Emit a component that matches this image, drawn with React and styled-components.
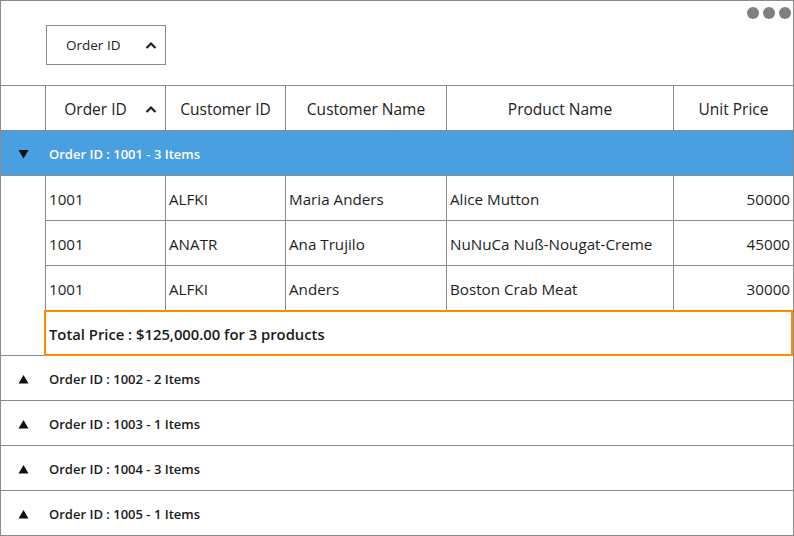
import React from "react"
import styled, { createGlobalStyle } from "styled-components"

const GlobalStyle = createGlobalStyle`
  html, body {
    margin: 0;
    padding: 0;
    background: #ffffff;
  }
  body {
    font-family: "Open Sans", "Noto Sans", sans-serif;
    color: #222222;
  }
`

const LINE = "#8a8a8a"
const COLS = "45px 120px 120px 161px 227px 119px"

const Grid = styled.div`
  width: 794px;
  height: 536px;
  box-sizing: border-box;
  border: 1px solid ${LINE};
  border-bottom: 0;
  overflow: hidden;
`

const DropArea = styled.div`
  height: 85px;
  box-sizing: border-box;
  border-bottom: 1px solid ${LINE};
  display: flex;
  justify-content: space-between;
  align-items: flex-start;
  padding: 6px 2px 0 45px;
`

const GroupChip = styled.div`
  margin-top: 18px;
  width: 120px;
  height: 40px;
  box-sizing: border-box;
  border: 1px solid ${LINE};
  display: flex;
  align-items: center;
  padding: 0 8px 0 19px;
  font-size: 13.5px;
  color: #222;
`

const ChipLabel = styled.span`
  flex: 1;
`

const Dots = styled.div`
  display: flex;
  gap: 4px;
`

const Dot = styled.span`
  width: 12px;
  height: 12px;
  border-radius: 50%;
  background: #7f7f7f;
`

const Row = styled.div`
  display: grid;
  grid-template-columns: ${COLS};
  height: 45px;
  box-sizing: border-box;
  border-bottom: ${p => (p.$flush ? "0" : `1px solid ${LINE}`)};
  background: ${p => (p.$active ? "#4a9fe1" : "transparent")};
`

const Cell = styled.div`
  box-sizing: border-box;
  border-right: ${p => (p.$last ? "0" : `1px solid ${LINE}`)};
  border-bottom: 1px solid ${LINE};
  display: flex;
  align-items: center;
  justify-content: ${p => (p.$right ? "flex-end" : "flex-start")};
  padding: 2px 3px 0 3px;
  font-size: 15.2px;
  color: #1e1e1e;
  white-space: nowrap;
`

const HeadCell = styled.div`
  box-sizing: border-box;
  border-right: ${p => (p.$last ? "0" : `1px solid ${LINE}`)};
  display: flex;
  align-items: center;
  padding: 1px ${p => (p.$sorted ? "8px" : "0")} 0 0;
  font-size: 15.5px;
  font-weight: 500;
  color: #222;
`

const HeadLabel = styled.span`
  flex: 1;
  text-align: center;
`

const Indent = styled.div`
  box-sizing: border-box;
  border-right: ${p => (p.$line ? `1px solid ${LINE}` : "0")};
  display: flex;
  align-items: center;
  justify-content: center;
  padding-top: 1px;
`

const Caption = styled.div`
  grid-column: 2 / -1;
  display: flex;
  align-items: center;
  padding: 2px 0 0 3px;
  font-size: 13px;
  font-weight: 600;
  color: ${p => (p.$active ? "#ffffff" : "#1a1a1a")};
`

const Summary = styled.div`
  grid-column: 2 / -1;
  margin: -1px 0 -1px -2px;
  height: 46px;
  box-sizing: border-box;
  border: 2px solid #ff8c00;
  display: flex;
  align-items: center;
  padding: 2px 0 0 3px;
  font-size: 14.8px;
  font-weight: 600;
  color: #1a1a1a;
`

const Caret = () => (
  <svg width="12" height="8" viewBox="0 0 12 8">
    <polyline points="1.5,7 6,2.5 10.5,7" fill="none" stroke="#222" strokeWidth="2.2" />
  </svg>
)

const Arrow = ({ down }) => (
  <svg width="11" height="10" viewBox="0 0 11 10">
    {down ? (
      <polygon points="0.5,1 10.5,1 5.5,9.5" fill="#111" />
    ) : (
      <polygon points="0.5,9.5 10.5,9.5 5.5,1" fill="#111" />
    )}
  </svg>
)

const columns = ["Order ID", "Customer ID", "Customer Name", "Product Name", "Unit Price"]

const items = [
  ["1001", "ALFKI", "Maria Anders", "Alice Mutton", "50000"],
  ["1001", "ANATR", "Ana Trujilo", "NuNuCa Nuß-Nougat-Creme", "45000"],
  ["1001", "ALFKI", "Anders", "Boston Crab Meat", "30000"],
]

const collapsed = [
  ["1002", 2],
  ["1003", 1],
  ["1004", 3],
  ["1005", 1],
]

const App = () => (
  <>
    <GlobalStyle />
    <Grid>
      <DropArea>
        <GroupChip>
          <ChipLabel>Order ID</ChipLabel>
          <Caret />
        </GroupChip>
        <Dots>
          <Dot />
          <Dot />
          <Dot />
        </Dots>
      </DropArea>

      <Row>
        <HeadCell />
        {columns.map((c, i) => (
          <HeadCell key={c} $sorted={i === 0} $last={i === columns.length - 1}>
            <HeadLabel>{c}</HeadLabel>
            {i === 0 && <Caret />}
          </HeadCell>
        ))}
      </Row>

      <Row $active>
        <Indent>
          <Arrow down />
        </Indent>
        <Caption $active>Order ID : 1001 - 3 Items</Caption>
      </Row>

      {items.map((r, idx) => (
        <Row key={idx} $flush>
          <Indent $line />
          {r.map((v, i) => (
            <Cell key={i} $right={i === 4} $last={i === 4}>
              {v}
            </Cell>
          ))}
        </Row>
      ))}

      <Row>
        <Indent />
        <Summary>Total Price : $125,000.00 for 3 products</Summary>
      </Row>

      {collapsed.map(([id, n]) => (
        <Row key={id}>
          <Indent>
            <Arrow />
          </Indent>
          <Caption>
            Order ID : {id} - {n} Items
          </Caption>
        </Row>
      ))}
    </Grid>
  </>
)

export default App
